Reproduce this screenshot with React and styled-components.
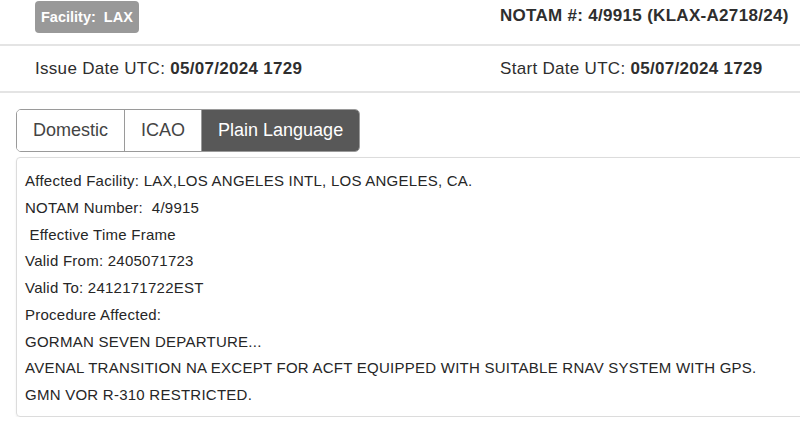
import React, { useState } from 'react'
import styled, { createGlobalStyle } from 'styled-components'

const GlobalStyle = createGlobalStyle`
  html, body {
    margin: 0;
    padding: 0;
    background: #fff;
    overflow: hidden;
  }
  body {
    font-family: "Liberation Sans", Arial, Helvetica, sans-serif;
    color: #333;
  }
`

const tabs = ['Domestic', 'ICAO', 'Plain Language']

const lines = [
  'Affected Facility: LAX,LOS ANGELES INTL, LOS ANGELES, CA.',
  'NOTAM Number:\u00a0 4/9915',
  '\u00a0Effective Time Frame',
  'Valid From: 2405071723',
  'Valid To: 2412171722EST',
  'Procedure Affected:',
  'GORMAN SEVEN DEPARTURE...',
  'AVENAL TRANSITION NA EXCEPT FOR ACFT EQUIPPED WITH SUITABLE RNAV SYSTEM WITH GPS.',
  'GMN VOR R-310 RESTRICTED.',
]

export default function App() {
  const [active, setActive] = useState('Plain Language')

  return (
    <Page>
      <GlobalStyle />
      <HeaderRow $height={46} $align="start">
        <Cell>
          <Badge>Facility:&nbsp; LAX</Badge>
        </Cell>
        <Cell $pad={6}>
          <Strong>NOTAM #: 4/9915 (KLAX-A2718/24)</Strong>
        </Cell>
      </HeaderRow>
      <HeaderRow $height={47} $align="center">
        <Cell>
          Issue Date UTC: <Strong>05/07/2024 1729</Strong>
        </Cell>
        <Cell>
          Start Date UTC: <Strong>05/07/2024 1729</Strong>
        </Cell>
      </HeaderRow>

      <TabBar>
        {tabs.map((t) => (
          <Tab key={t} $active={t === active} onClick={() => setActive(t)}>
            {t}
          </Tab>
        ))}
      </TabBar>

      <Panel>
        {lines.map((l, i) => (
          <Line key={i}>{l}</Line>
        ))}
      </Panel>
    </Page>
  )
}

const Page = styled.div`
  width: 800px;
`

const HeaderRow = styled.div`
  display: grid;
  grid-template-columns: 465px 1fr;
  align-items: ${(p) => p.$align};
  height: ${(p) => p.$height}px;
  padding-left: 35px;
  border-bottom: 2px solid #e4e4e4;
  font-size: 17px;
  letter-spacing: 0.3px;
  color: #2e2e2e;
  box-sizing: border-box;
`

const Cell = styled.div`
  padding-top: ${(p) => p.$pad || 0}px;
  white-space: nowrap;
`

const Strong = styled.span`
  font-weight: bold;
`

const Badge = styled.span`
  display: inline-block;
  margin-top: 1px;
  padding: 0 6px;
  height: 32px;
  line-height: 32px;
  background: #999;
  color: #fff;
  font-weight: bold;
  font-size: 14.5px;
  letter-spacing: 0;
  border-radius: 4px;
`

const TabBar = styled.div`
  display: inline-flex;
  margin: 16px 0 0 16px;
  border: 1px solid #9a9a9a;
  border-radius: 5px;
  overflow: hidden;
  height: 43px;
  box-sizing: border-box;
`

const Tab = styled.div`
  display: flex;
  align-items: center;
  padding: 0 16px;
  font-size: 18px;
  cursor: pointer;
  color: ${(p) => (p.$active ? '#fff' : '#444')};
  background: ${(p) => (p.$active ? '#585858' : '#fff')};
  & + & {
    border-left: 1px solid #9a9a9a;
  }
`

const Panel = styled.div`
  margin: 5px 0 0 16px;
  width: 820px;
  padding: 10px 8px 7px;
  border: 1px solid #dcdcdc;
  border-radius: 4px;
  box-shadow: 0 1px 2px rgba(0, 0, 0, 0.08);
  font-size: 15px;
  letter-spacing: 0.25px;
  color: #262626;
`

const Line = styled.div`
  line-height: 26.75px;
  white-space: nowrap;
`
